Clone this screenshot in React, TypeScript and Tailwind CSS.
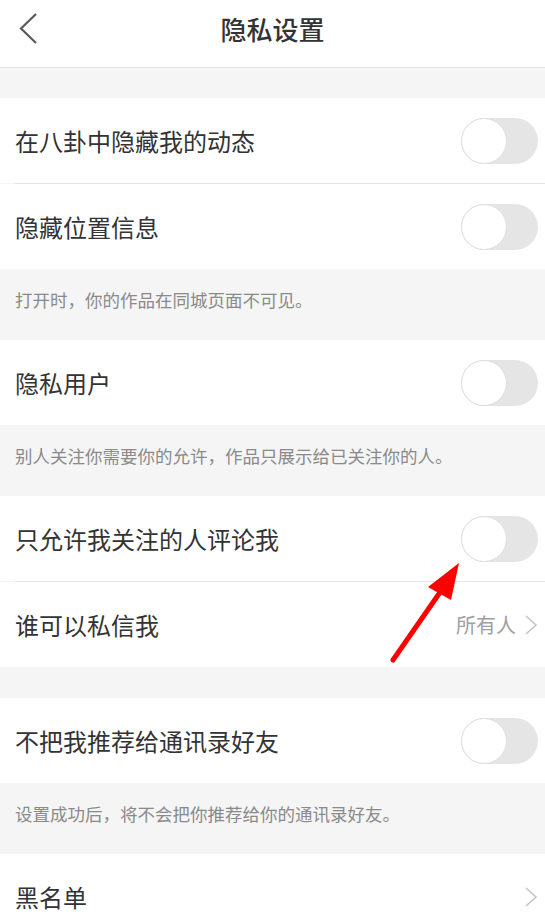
import React from 'react';

const Toggle: React.FC = () => (
  <div className="relative w-[77px] h-[46px] rounded-full bg-[#e5e5e5]">
    <div className="absolute left-0 top-0 w-[46px] h-[46px] rounded-full bg-white border border-[#dedede]" />
  </div>
);

const Chevron: React.FC = () => (
  <svg width="14" height="22" viewBox="0 0 14 22" fill="none">
    <path d="M2 2 L12 11 L2 20" stroke="#c4c4c4" strokeWidth="1.6" strokeLinejoin="miter" />
  </svg>
);

const Row: React.FC<{ label: string; right?: React.ReactNode }> = ({ label, right }) => (
  <div className="h-[85px] flex items-center justify-between pl-[15px] pr-[7px] bg-white">
    <span className="text-[24px] text-[#333]">{label}</span>
    {right}
  </div>
);

const Note: React.FC<{ text: string }> = ({ text }) => (
  <div className="h-[71px] pt-[19px] px-[15px] text-[17.5px] text-[#8a8a8a] leading-[24px]">{text}</div>
);

const Divider = () => <div className="ml-[15px] h-px bg-[#e6e6e6]" />;

export default function App() {
  return (
    <div
      className="relative w-[545px] h-[923px] overflow-hidden bg-[#f5f5f5]"
      style={{ fontFamily: '"Noto Sans CJK SC", "Noto Sans", sans-serif' }}
    >
      <div className="h-[68px] bg-white border-b border-[#e2e2e2] relative flex items-center justify-center">
        <svg className="absolute left-[18px] top-[12px]" width="22" height="34" viewBox="0 0 22 34" fill="none">
          <path d="M18 2 L3 16.5 L18 31" stroke="#5a5a5a" strokeWidth="2.2" />
        </svg>
        <span className="text-[26px] font-medium text-[#333] -mt-[11px]">隐私设置</span>
      </div>
      <div className="h-[30px]" />

      <Row label="在八卦中隐藏我的动态" right={<Toggle />} />
      <Divider />
      <Row label="隐藏位置信息" right={<Toggle />} />
      <Note text="打开时，你的作品在同城页面不可见。" />

      <Row label="隐私用户" right={<Toggle />} />
      <Note text="别人关注你需要你的允许，作品只展示给已关注你的人。" />

      <Row label="只允许我关注的人评论我" right={<Toggle />} />
      <Divider />
      <Row
        label="谁可以私信我"
        right={
          <div className="flex items-center gap-[8px]">
            <span className="text-[20px] text-[#a0a0a0]">所有人</span>
            <Chevron />
          </div>
        }
      />
      <div className="h-[31px]" />

      <Row label="不把我推荐给通讯录好友" right={<Toggle />} />
      <Note text="设置成功后，将不会把你推荐给你的通讯录好友。" />

      <Row label="黑名单" right={<Chevron />} />

      <svg className="absolute left-0 top-0 pointer-events-none" width="545" height="923">
        <line x1="393" y1="660" x2="443" y2="588" stroke="#ff0000" strokeWidth="5" strokeLinecap="round" />
        <polygon points="459,563 428,587 451,600" fill="#ff0000" />
      </svg>
    </div>
  );
}
